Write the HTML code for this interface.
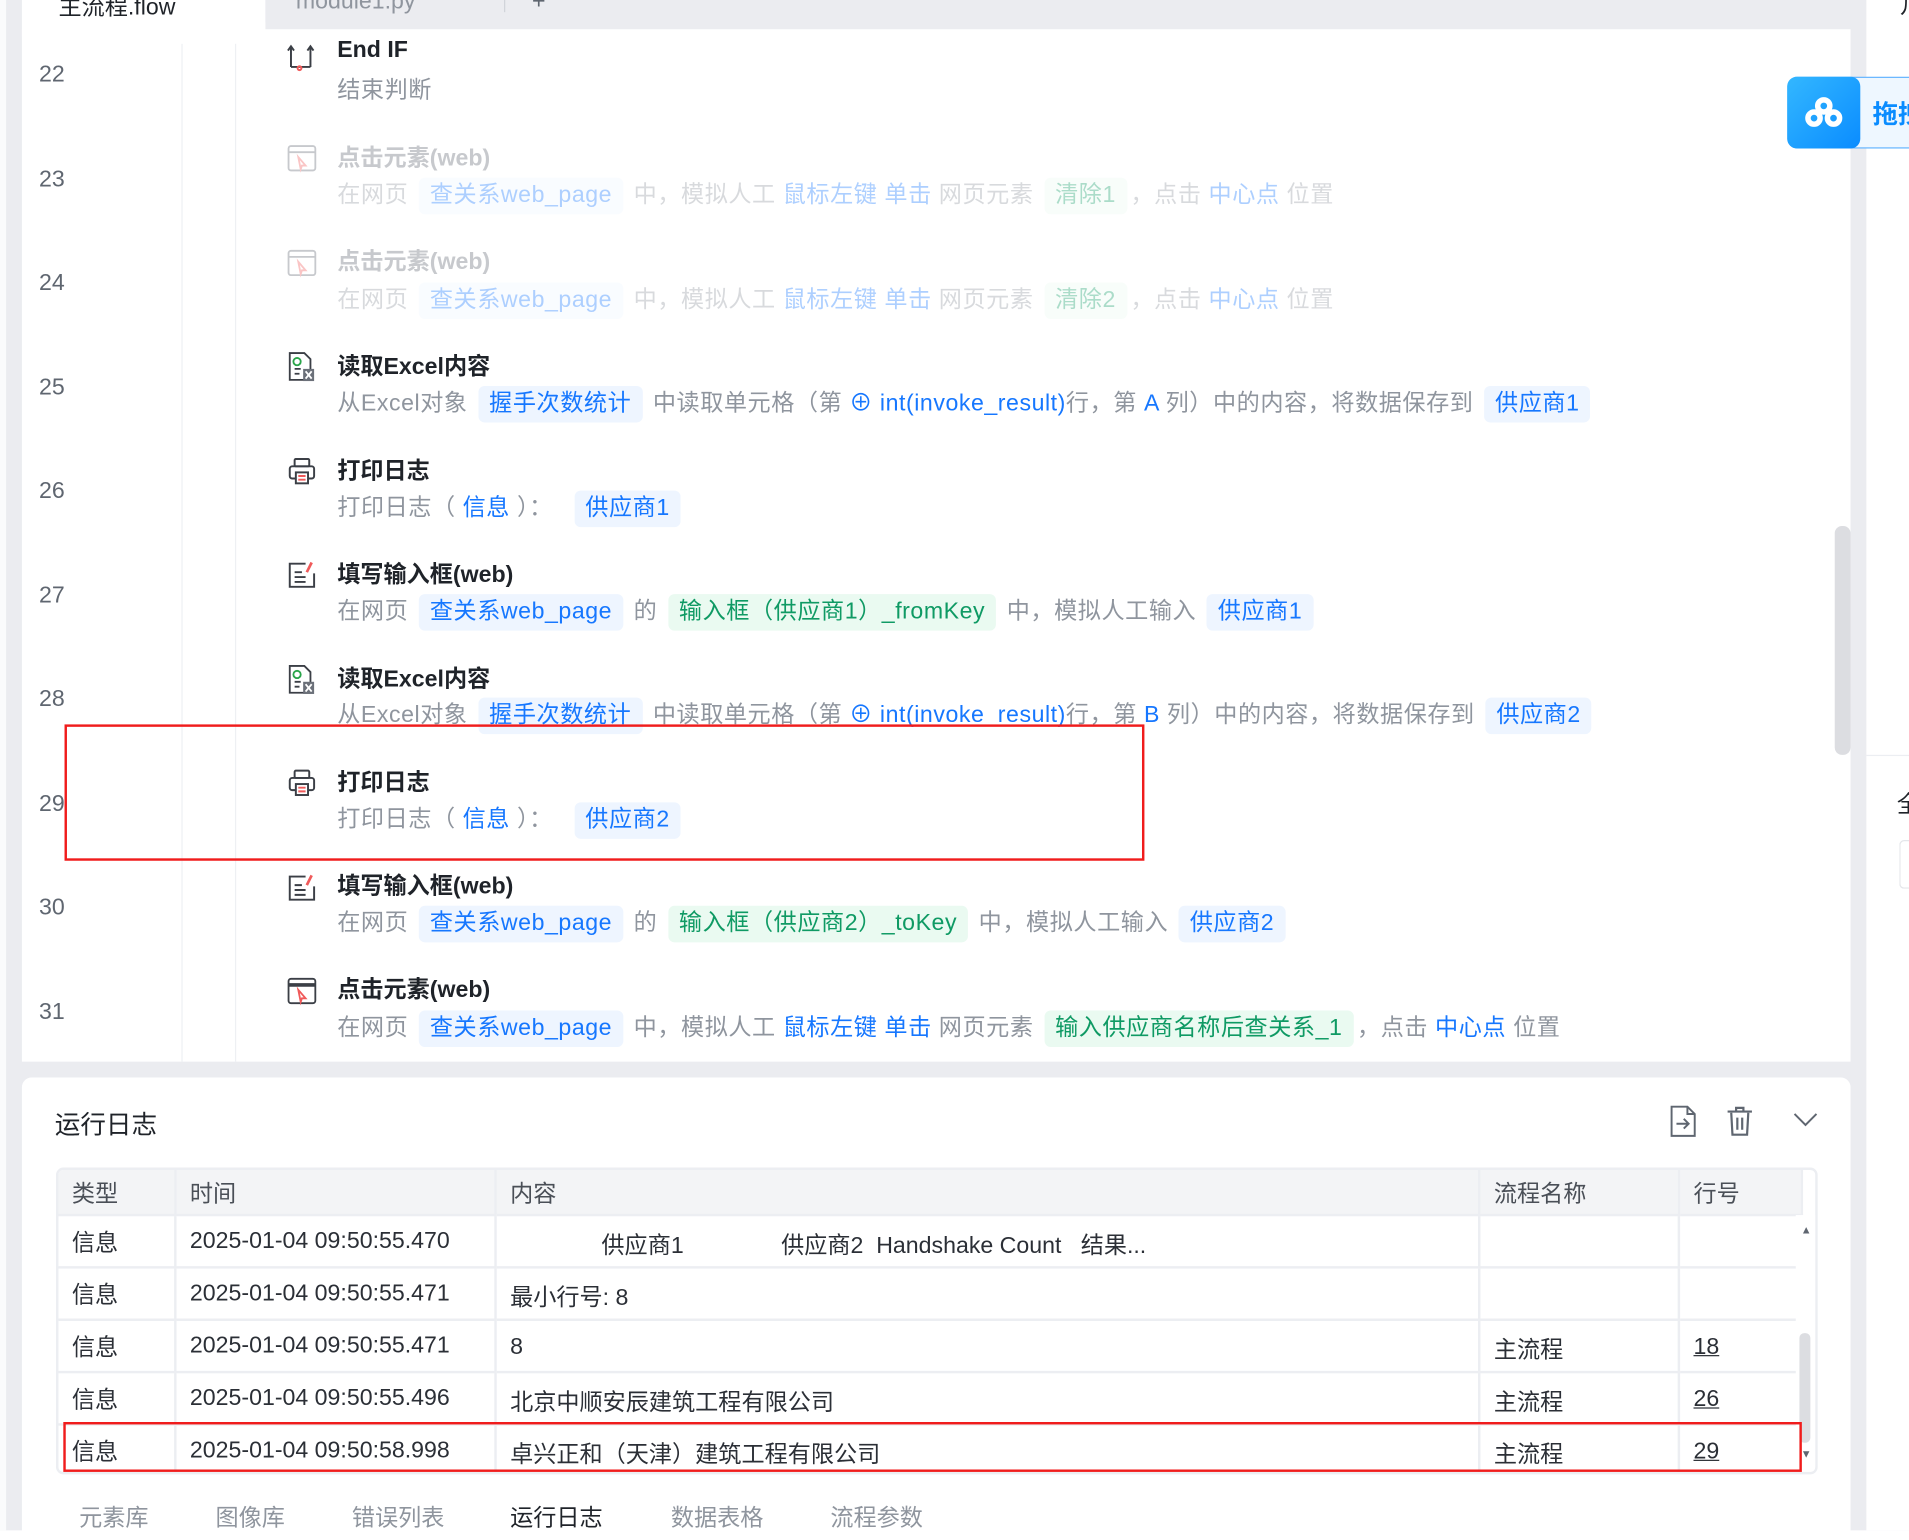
<!DOCTYPE html>
<html><head><meta charset="utf-8"><style>
*{margin:0;padding:0;box-sizing:border-box}
html,body{width:1909px;height:1530px;overflow:hidden;background:#fff}
#w{position:absolute;left:0;top:0;width:1568px;height:1257px;transform:scale(1.21747);transform-origin:0 0;background:#ebecf0;font-family:"Liberation Sans","Noto Sans CJK SC",sans-serif;color:#1f2329}
.a{position:absolute;white-space:nowrap}
.ln{position:absolute;left:32px;font-size:19px;color:#5f6670}
.t{position:absolute;left:277px;font-size:19px;font-weight:bold;color:#1f2329}
.s{position:absolute;left:277px;font-size:19px;color:#8f959e;height:30px;line-height:30px;letter-spacing:0.45px}
.b{color:#1677ff}
.c{display:inline-block;background:#eef5ff;color:#1677ff;border-radius:5px;padding:0 9px;margin:0 3px}
.g{display:inline-block;background:#eafaf1;color:#0f9a64;border-radius:5px;padding:0 9px;margin:0 3px}
.ic{position:absolute;left:235px;width:26px;height:26px}
.fade{opacity:.35}
table{border-collapse:collapse;font-size:19px;color:#2b2f36;table-layout:fixed}
td{border:2px solid #eceef2;height:43px;padding:0 11px;vertical-align:middle;overflow:hidden;white-space:nowrap}
tr.h td{height:38px;background:#f3f4f6;color:#4a4f57}
.p{padding-top:3px}
</style></head><body><div id="w">
<div class="a" style="left:0;top:0;width:5px;height:1257px;background:#fafbfc"></div>
<div class="a" style="left:18px;top:0;width:200px;height:30px;background:#fff"></div>
<div class="a" style="left:48px;top:-9px;font-size:19px">主流程.flow</div>
<div class="a" style="left:218px;top:0;width:1302px;height:24px;background:#ebecf0;border-bottom-left-radius:6px"></div>
<div class="a" style="left:243px;top:-9px;font-size:19px;color:#8f959e">module1.py</div>
<div class="a" style="left:414px;top:0;width:1px;height:10px;background:#d0d3d9"></div>
<div class="a" style="left:437px;top:-9px;font-size:19px;color:#5f6670">+</div>
<div class="a" style="left:18px;top:24px;width:1502px;height:848px;background:#fff"></div>
<div class="a" style="left:149px;top:36px;width:1px;height:836px;background:#eef0f3"></div>
<div class="a" style="left:193px;top:36px;width:1px;height:836px;background:#eef0f3"></div>
<div class="a" style="left:1507px;top:432px;width:13px;height:188px;background:#dcdde1;border-radius:6px"></div>

<div class="ln" style="top:51px">22</div><div class="ln" style="top:137px">23</div><div class="ln" style="top:222px">24</div><div class="ln" style="top:308px">25</div><div class="ln" style="top:393px">26</div><div class="ln" style="top:479px">27</div><div class="ln" style="top:564px">28</div><div class="ln" style="top:650px">29</div><div class="ln" style="top:735px">30</div><div class="ln" style="top:821px">31</div>

<svg class="ic" style="top:33px" viewBox="0 0 26 26" fill="none" stroke="#3b3f46" stroke-width="1.6"><path d="M4 22V6M1.5 8.5L4 5l2.5 3.5M20 22V6M17.5 8.5L20 5l2.5 3.5M4 22h16"/><circle cx="11" cy="23" r="1.6" stroke="#f05a5a"/></svg>
<div class="t" style="top:31px">End IF</div>
<div class="s" style="top:60px">结束判断</div>
<div class="fade">
<svg class="ic" style="top:117px" viewBox="0 0 26 26" fill="none" stroke="#5f6670" stroke-width="1.5"><rect x="2" y="3" width="22" height="20" rx="2"/><path d="M2 8h22"/><path d="M10 12l6 7-3 0-1 3z" stroke="#f05a5a"/></svg>
<div class="t" style="top:115px;color:#5f6670">点击元素(web)</div>
<div class="s" style="top:146px">在网页 <span class="c">查关系web_page</span> 中，模拟人工 <span class="b">鼠标左键</span> <span class="b">单击</span> 网页元素 <span class="g">清除1</span>，点击 <span class="b">中心点</span> 位置</div>
<svg class="ic" style="top:203px" viewBox="0 0 26 26" fill="none" stroke="#5f6670" stroke-width="1.5"><rect x="2" y="3" width="22" height="20" rx="2"/><path d="M2 8h22"/><path d="M10 12l6 7-3 0-1 3z" stroke="#f05a5a"/></svg>
<div class="t" style="top:200px;color:#5f6670">点击元素(web)</div>
<div class="s" style="top:232px">在网页 <span class="c">查关系web_page</span> 中，模拟人工 <span class="b">鼠标左键</span> <span class="b">单击</span> 网页元素 <span class="g">清除2</span>，点击 <span class="b">中心点</span> 位置</div>
</div>
<svg class="ic" style="top:288px" viewBox="0 0 26 26" fill="none" stroke="#3b3f46" stroke-width="1.5"><path d="M3 2h12l5 5v17H3z"/><circle cx="9" cy="9" r="3" stroke="#2aa54a"/><path d="M7 15h5M7 19h4"/><rect x="14" y="15" width="9" height="10" fill="#6b7079" stroke="none"/><path d="M16 17l5 6M21 17l-5 6" stroke="#fff"/></svg>
<div class="t" style="top:286px">读取Excel内容</div>
<div class="s" style="top:317px">从Excel对象 <span class="c">握手次数统计</span> 中读取单元格（第 <span class="b">⊕ int(invoke_result)</span>行，第 <span class="b">A</span> 列）中的内容，将数据保存到 <span class="c">供应商1</span></div>
<svg class="ic" style="top:374px" viewBox="0 0 26 26" fill="none" stroke="#3b3f46" stroke-width="1.6"><rect x="7" y="3" width="12" height="6" rx="1"/><rect x="3" y="9" width="20" height="10" rx="2"/><rect x="8" y="14" width="10" height="9" fill="#fff"/><path d="M10 17h6M10 20h6" stroke="#f05a5a"/></svg>
<div class="t" style="top:372px">打印日志</div>
<div class="s" style="top:403px">打印日志（ <span class="b">信息</span> ）： <span class="c" style="margin-left:12px">供应商1</span></div>
<svg class="ic" style="top:459px" viewBox="0 0 26 26" fill="none" stroke="#3b3f46" stroke-width="1.6"><path d="M16 4H3v19h20V12"/><path d="M7 11h6M7 15h9M7 19h9"/><path d="M21 3l-4 8" stroke="#f05a5a" stroke-width="2.2"/></svg>
<div class="t" style="top:457px">填写输入框(web)</div>
<div class="s" style="top:488px">在网页 <span class="c">查关系web_page</span> 的 <span class="g">输入框（供应商1）_fromKey</span> 中，模拟人工输入 <span class="c">供应商1</span></div>
<svg class="ic" style="top:545px" viewBox="0 0 26 26" fill="none" stroke="#3b3f46" stroke-width="1.5"><path d="M3 2h12l5 5v17H3z"/><circle cx="9" cy="9" r="3" stroke="#2aa54a"/><path d="M7 15h5M7 19h4"/><rect x="14" y="15" width="9" height="10" fill="#6b7079" stroke="none"/><path d="M16 17l5 6M21 17l-5 6" stroke="#fff"/></svg>
<div class="t" style="top:543px">读取Excel内容</div>
<div class="s" style="top:573px">从Excel对象 <span class="c">握手次数统计</span> 中读取单元格（第 <span class="b">⊕ int(invoke_result)</span>行，第 <span class="b">B</span> 列）中的内容，将数据保存到 <span class="c">供应商2</span></div>
<svg class="ic" style="top:630px" viewBox="0 0 26 26" fill="none" stroke="#3b3f46" stroke-width="1.6"><rect x="7" y="3" width="12" height="6" rx="1"/><rect x="3" y="9" width="20" height="10" rx="2"/><rect x="8" y="14" width="10" height="9" fill="#fff"/><path d="M10 17h6M10 20h6" stroke="#f05a5a"/></svg>
<div class="t" style="top:628px">打印日志</div>
<div class="s" style="top:659px">打印日志（ <span class="b">信息</span> ）： <span class="c" style="margin-left:12px">供应商2</span></div>
<svg class="ic" style="top:716px" viewBox="0 0 26 26" fill="none" stroke="#3b3f46" stroke-width="1.6"><path d="M16 4H3v19h20V12"/><path d="M7 11h6M7 15h9M7 19h9"/><path d="M21 3l-4 8" stroke="#f05a5a" stroke-width="2.2"/></svg>
<div class="t" style="top:713px">填写输入框(web)</div>
<div class="s" style="top:744px">在网页 <span class="c">查关系web_page</span> 的 <span class="g">输入框（供应商2）_toKey</span> 中，模拟人工输入 <span class="c">供应商2</span></div>
<svg class="ic" style="top:801px" viewBox="0 0 26 26" fill="none" stroke="#3b3f46" stroke-width="1.5"><rect x="2" y="3" width="22" height="20" rx="2"/><path d="M2 8h22" stroke-width="3"/><path d="M10 12l6 7-3 0-1 3z" stroke="#f05a5a"/></svg>
<div class="t" style="top:798px">点击元素(web)</div>
<div class="s" style="top:830px">在网页 <span class="c">查关系web_page</span> 中，模拟人工 <span class="b">鼠标左键</span> <span class="b">单击</span> 网页元素 <span class="g">输入供应商名称后查关系_1</span>，点击 <span class="b">中心点</span> 位置</div>

<div class="a" style="left:53px;top:595px;width:887px;height:112px;border:2.5px solid #f01c1c"></div>

<div class="a" style="left:1533px;top:0;width:35px;height:1257px;background:#fff"></div>
<div class="a" style="left:1533px;top:620px;width:35px;height:1px;background:#eceef2"></div>
<div class="a" style="left:1560px;top:-8px;font-size:18px">ル</div>
<div class="a" style="left:1558px;top:646px;font-size:19px">全</div>
<div class="a" style="left:1560px;top:690px;width:10px;height:40px;border:1px solid #e3e5e9;border-right:none;border-radius:4px 0 0 4px"></div>
<div class="a" style="left:1468px;top:63px;width:110px;height:59px;background:#eef7ff;border:1px solid #5ab0ff;border-radius:8px"></div>
<div class="a" style="left:1468px;top:63px;width:60px;height:59px;background:linear-gradient(135deg,#33b7ff,#0a8cff);border-radius:8px"></div>
<svg class="a" style="left:1481px;top:78px" width="34" height="30" viewBox="0 0 34 30" fill="none" stroke="#fff" stroke-width="4.5"><circle cx="17" cy="9" r="5"/><circle cx="9" cy="19" r="5"/><circle cx="25" cy="19" r="5"/></svg>
<div class="a" style="left:1538px;top:78px;font-size:21px;font-weight:bold;color:#0a8cff">拖拽</div>

<div class="a" style="left:18px;top:885px;width:1502px;height:380px;background:#fff;border-radius:8px"></div>
<div class="a" style="left:45px;top:908px;font-size:21px;color:#1f2329">运行日志</div>
<svg class="a" style="left:1371px;top:908px" width="24" height="26" viewBox="0 0 24 26" fill="none" stroke="#5f6670" stroke-width="1.6"><path d="M2 1h13l6 6v18H2z"/><path d="M15 1v6h6M6 15h9M12 11l4 4-4 4"/></svg>
<svg class="a" style="left:1418px;top:908px" width="22" height="26" viewBox="0 0 22 26" fill="none" stroke="#5f6670" stroke-width="1.8"><path d="M1 5h20M8 5V2h6v3M4 6l1 18h12l1-18M9 10v10M13 10v10"/></svg>
<svg class="a" style="left:1473px;top:914px" width="20" height="12" viewBox="0 0 20 12" fill="none" stroke="#5f6670" stroke-width="1.6"><path d="M1 1l9 9 9-9"/></svg>

<div class="a" style="left:46px;top:959px;width:1447px;height:252px;border:2px solid #eceef2;border-radius:6px;overflow:hidden">
<table style="position:absolute;left:-2px;top:-2px;width:1433px">
<colgroup><col style="width:97px"><col style="width:263px"><col style="width:808px"><col style="width:164px"><col style="width:101px"></colgroup>
<tr class="h"><td>类型</td><td>时间</td><td>内容</td><td>流程名称</td><td>行号</td></tr>
<tr><td>信息</td><td>2025-01-04 09:50:55.470</td><td class="p"><span style="padding-left:75px">供应商1</span><span style="padding-left:80px">供应商2</span>&nbsp; Handshake Count &nbsp; 结果...</td><td></td><td></td></tr>
<tr><td>信息</td><td>2025-01-04 09:50:55.471</td><td class="p">最小行号: 8</td><td></td><td></td></tr>
<tr><td>信息</td><td>2025-01-04 09:50:55.471</td><td class="p">8</td><td class="p">主流程</td><td class="p"><u>18</u></td></tr>
<tr><td>信息</td><td>2025-01-04 09:50:55.496</td><td class="p">北京中顺安辰建筑工程有限公司</td><td class="p">主流程</td><td class="p"><u>26</u></td></tr>
<tr><td>信息</td><td>2025-01-04 09:50:58.998</td><td class="p">卓兴正和（天津）建筑工程有限公司</td><td class="p">主流程</td><td class="p"><u>29</u></td></tr>
</table>
<div class="a" style="right:0;top:37px;width:16px;height:215px;background:#fff"></div>
<div class="a" style="right:4px;top:134px;width:9px;height:90px;background:#dcdde1;border-radius:4px"></div>
<div class="a" style="right:3px;top:44px;font-size:9px;color:#5f6670">▲</div>
<div class="a" style="right:3px;top:228px;font-size:9px;color:#5f6670">▼</div>
</div>
<div class="a" style="left:52px;top:1168px;width:1428px;height:41px;border:2.5px solid #f01c1c"></div>

<div class="a" style="left:65px;top:1232px;font-size:19px;color:#8f959e">元素库</div>
<div class="a" style="left:177px;top:1232px;font-size:19px;color:#8f959e">图像库</div>
<div class="a" style="left:289px;top:1232px;font-size:19px;color:#8f959e">错误列表</div>
<div class="a" style="left:419px;top:1232px;font-size:19px;color:#1f2329">运行日志</div>
<div class="a" style="left:551px;top:1232px;font-size:19px;color:#8f959e">数据表格</div>
<div class="a" style="left:682px;top:1232px;font-size:19px;color:#8f959e">流程参数</div>
</div></body></html>
